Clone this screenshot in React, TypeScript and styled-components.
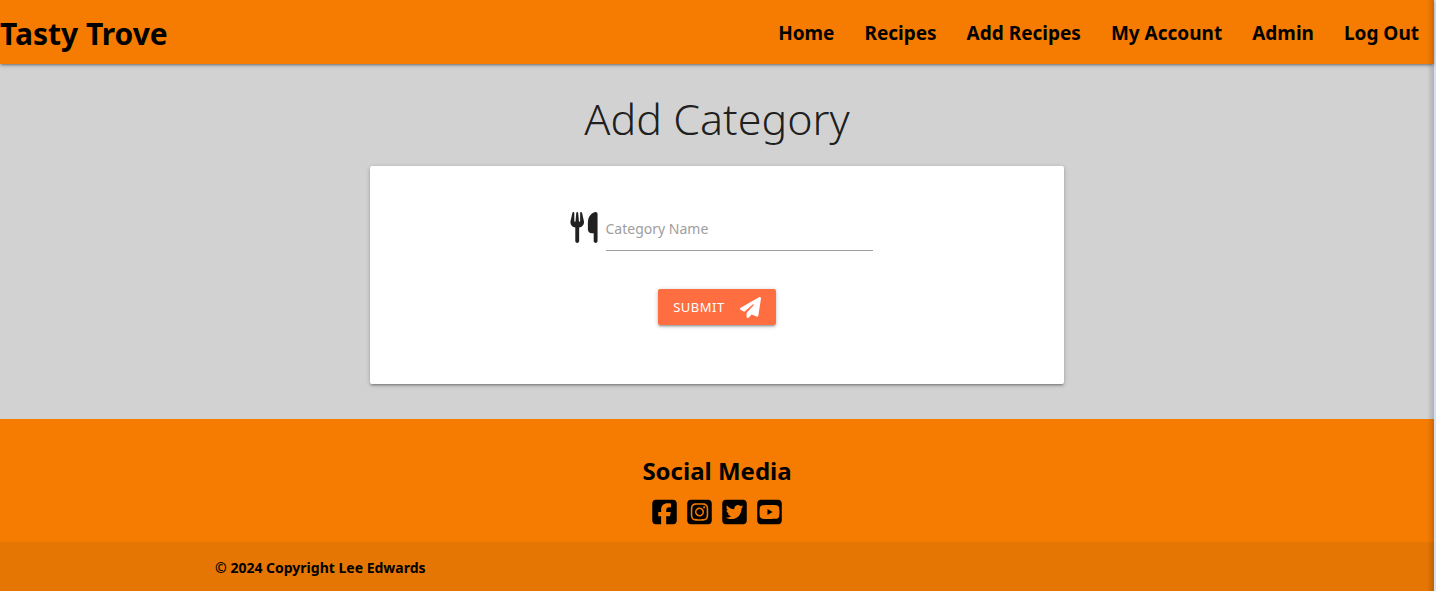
import React from "react";
import styled, { createGlobalStyle } from "styled-components";
import {
  FaPaperPlane,
  FaSquareFacebook,
  FaSquareInstagram,
  FaSquareTwitter,
  FaSquareYoutube,
  FaUtensils,
} from "react-icons/fa6";

const GlobalStyle = createGlobalStyle`
  *, *::before, *::after { box-sizing: border-box; }
  body {
    margin: 0;
    font-family: "Segoe UI", "Noto Sans", "Open Sans", sans-serif;
    color: rgba(0, 0, 0, 0.87);
  }
  a { color: inherit; text-decoration: none; }
`;

const Page = styled.div`
  position: relative;
  display: flex;
  flex-direction: column;
  min-height: 100vh;
  background: #d2d2d2;
  border-right: 2px solid #d6e2f3;

  &::after {
    content: "";
    position: absolute;
    inset: 0 0 0 auto;
    width: 7px;
    background: linear-gradient(to right, transparent, rgba(0, 0, 0, 0.16));
    pointer-events: none;
  }
`;

const NavBar = styled.nav`
  display: flex;
  align-items: center;
  justify-content: space-between;
  height: 64px;
  background: #f57c00;
  color: #000;
  box-shadow: 0 2px 2px 0 rgba(0, 0, 0, 0.14), 0 3px 1px -2px rgba(0, 0, 0, 0.12),
    0 1px 5px 0 rgba(0, 0, 0, 0.2);
`;

const Brand = styled.a`
  padding-top: 4px;
  font-size: 30px;
  line-height: 60px;
  font-weight: 700;
`;

const NavList = styled.ul`
  display: flex;
  margin: 0;
  padding: 0;
  list-style: none;
`;

const NavLink = styled.a`
  display: block;
  padding: 2px 15px 0;
  font-size: 19px;
  line-height: 62px;
  font-weight: 700;
`;

const Main = styled.main`
  flex: 1;
  display: flex;
  flex-direction: column;
  align-items: center;
  padding: 27px 16px 35px;
`;

const Title = styled.h1`
  margin: 0 0 19px;
  font-size: 43px;
  line-height: 56px;
  font-weight: 300;
`;

const Card = styled.form`
  display: flex;
  flex-direction: column;
  align-items: center;
  gap: 38px;
  width: 100%;
  max-width: 694px;
  padding: 40px 24px 59px;
  background: #fff;
  border-radius: 2px;
  box-shadow: 0 2px 2px 0 rgba(0, 0, 0, 0.14), 0 3px 1px -2px rgba(0, 0, 0, 0.12),
    0 1px 5px 0 rgba(0, 0, 0, 0.2);
`;

const Field = styled.label`
  display: flex;
  align-items: flex-start;
  gap: 8px;
  padding-left: 8px;
`;

const FieldIcon = styled(FaUtensils)`
  width: 28px;
  height: 31px;
  margin-top: 6px;
`;

const TextInput = styled.input`
  width: 267px;
  height: 45px;
  padding: 0;
  border: 0;
  border-bottom: 1px solid #9e9e9e;
  outline: 0;
  background: transparent;
  font: inherit;
  font-size: 14px;

  &::placeholder { color: #9e9e9e; opacity: 1; }
`;

const SubmitButton = styled.button`
  display: flex;
  align-items: center;
  gap: 15px;
  height: 36px;
  padding: 0 15px;
  border: 0;
  border-radius: 2px;
  background: #ff6e40;
  color: #fff;
  font: inherit;
  font-size: 13px;
  letter-spacing: 0.5px;
  text-transform: uppercase;
  box-shadow: 0 2px 2px 0 rgba(0, 0, 0, 0.14), 0 3px 1px -2px rgba(0, 0, 0, 0.12),
    0 1px 5px 0 rgba(0, 0, 0, 0.2);
`;

const Footer = styled.footer`
  background: #f57c00;
  color: #000;
`;

const Social = styled.section`
  display: flex;
  flex-direction: column;
  align-items: center;
  padding: 35px 16px 16px;
`;

const SocialTitle = styled.h2`
  margin: 0 0 10px;
  font-size: 24px;
  line-height: 34px;
  font-weight: 700;
`;

const SocialLinks = styled.div`
  display: flex;
  gap: 10px;
`;

const SocialLink = styled.a`
  display: flex;

  svg {
    width: 25px;
    height: 28px;
  }
`;

const CopyrightBar = styled.div`
  padding: 2px 15% 0;
  background: rgba(51, 51, 51, 0.08);
  font-size: 14px;
  line-height: 47px;
  font-weight: 700;
`;

const navItems = ["Home", "Recipes", "Add Recipes", "My Account", "Admin", "Log Out"];

const socials = [
  { name: "Facebook", Icon: FaSquareFacebook },
  { name: "Instagram", Icon: FaSquareInstagram },
  { name: "Twitter", Icon: FaSquareTwitter },
  { name: "YouTube", Icon: FaSquareYoutube },
];

export default function App() {
  return (
    <>
      <GlobalStyle />
      <Page>
        <NavBar>
          <Brand href="#">Tasty Trove</Brand>
          <NavList>
            {navItems.map((item) => (
              <li key={item}>
                <NavLink href="#">{item}</NavLink>
              </li>
            ))}
          </NavList>
        </NavBar>
        <Main>
          <Title>Add Category</Title>
          <Card onSubmit={(event) => event.preventDefault()}>
            <Field>
              <FieldIcon />
              <TextInput
                type="text"
                name="category_name"
                placeholder="Category Name"
                aria-label="Category Name"
              />
            </Field>
            <SubmitButton type="submit">
              Submit
              <FaPaperPlane size={21} />
            </SubmitButton>
          </Card>
        </Main>
        <Footer>
          <Social>
            <SocialTitle>Social Media</SocialTitle>
            <SocialLinks>
              {socials.map(({ name, Icon }) => (
                <SocialLink key={name} href="#" aria-label={name}>
                  <Icon />
                </SocialLink>
              ))}
            </SocialLinks>
          </Social>
          <CopyrightBar>© 2024 Copyright Lee Edwards</CopyrightBar>
        </Footer>
      </Page>
    </>
  );
}
